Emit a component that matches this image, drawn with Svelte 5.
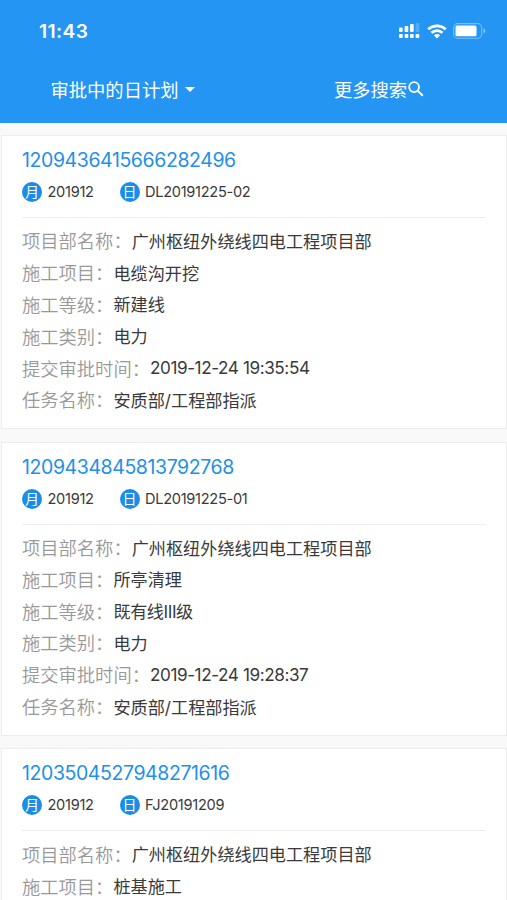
<script>
  const project = '广州枢纽外绕线四电工程项目部';
  const plans = [
    {
      id: '1209436415666282496', month: '201912', day: 'DL20191225-02',
      fields: [
        ['项目部名称', project],
        ['施工项目', '电缆沟开挖'],
        ['施工等级', '新建线'],
        ['施工类别', '电力'],
        ['提交审批时间', '2019-12-24 19:35:54'],
        ['任务名称', '安质部/工程部指派']
      ]
    },
    {
      id: '1209434845813792768', month: '201912', day: 'DL20191225-01',
      fields: [
        ['项目部名称', project],
        ['施工项目', '所亭清理'],
        ['施工等级', '既有线III级'],
        ['施工类别', '电力'],
        ['提交审批时间', '2019-12-24 19:28:37'],
        ['任务名称', '安质部/工程部指派']
      ]
    },
    {
      id: '1203504527948271616', month: '201912', day: 'FJ20191209',
      fields: [
        ['项目部名称', project],
        ['施工项目', '桩基施工']
      ]
    }
  ];
  const hasLatin = (text) => /[0-9I]/.test(text);
</script>

<div class="screen">
  <header>
    <div class="status">
      <span class="time">11:43</span>
      <div class="indicators">
        <svg width="21" height="16" viewBox="0 0 21 16" fill="#fff">
          <rect x="0" y="4.5" width="3.7" height="4.5" rx="1" />
          <rect x="5.6" y="3" width="3.7" height="6" rx="1" />
          <rect x="11" y="1" width="3.7" height="8" rx="1" />
          <rect x="16.6" y="0" width="3.7" height="9" rx="1" opacity=".22" />
          <rect x="0" y="11" width="3.7" height="4" rx="1" />
          <rect x="5.6" y="11" width="3.7" height="4" rx="1" />
          <rect x="11" y="11" width="3.7" height="4" rx="1" />
          <rect x="16.6" y="11" width="3.7" height="4" rx="1" />
        </svg>
        <svg class="wifi" width="20" height="15" viewBox="0 0 20 15">
          <path d="M1.2 5.3C6.2.6 13.8.6 18.8 5.3M4.5 8.7c3.1-2.9 7.9-2.9 11 0" fill="none" stroke="#fff" stroke-width="2.7" />
          <path d="M6.9 11.2c1.8-1.6 4.4-1.6 6.2 0L10 14.5z" fill="#fff" />
        </svg>
        <svg class="battery" width="33" height="16" viewBox="0 0 33 16">
          <rect x=".6" y=".6" width="28" height="14.6" rx="4" fill="none" stroke="#fff" stroke-opacity=".4" stroke-width="1.1" />
          <rect x="2.5" y="2.5" width="21" height="10.8" rx="1.6" fill="#fff" />
          <path d="M30.5 5.3c2.3.8 2.3 4.4 0 5.2z" fill="#fff" opacity=".5" />
        </svg>
      </div>
    </div>
    <nav>
      <button>审批中的日计划<i class="caret"></i></button>
      <button>更多搜索<svg class="search" width="16" height="16" viewBox="0 0 16 16" fill="none" stroke="#fff" stroke-width="1.8"><circle cx="6.1" cy="6.1" r="4.9" /><path d="M9.6 9.6l5.2 5.2" stroke-width="2" /></svg></button>
    </nav>
  </header>

  <main>
    {#each plans as plan}
      <article>
        <h2>{plan.id}</h2>
        <div class="meta">
          <span class="badge">月</span><span class="month">{plan.month}</span>
          <span class="badge">日</span><span>{plan.day}</span>
        </div>
        <dl>
          {#each plan.fields as [label, value]}
            <div class="row"><dt>{label}：</dt><dd class:latin={hasLatin(value)}>{value}</dd></div>
          {/each}
        </dl>
      </article>
    {/each}
  </main>
</div>

<style>
  :global(body) { margin: 0; }
  .screen {
    width: 507px;
    height: 900px;
    overflow: hidden;
    background: #f9f9f9;
    color: #3a3a3a;
    font-family: Inter, "Noto Sans CJK SC", sans-serif;
  }
  header { height: 123px; background: #2495f3; color: #fff; }
  .status {
    display: flex;
    justify-content: space-between;
    align-items: center;
    height: 62px;
    padding: 0 21px 0 39px;
    box-sizing: border-box;
  }
  .time { font-size: 19.2px; font-weight: 600; letter-spacing: .4px; }
  .indicators { display: flex; align-items: center; }
  .wifi { margin-left: 7px; }
  .battery { margin-left: 6px; }
  nav { display: flex; height: 54px; }
  button {
    display: flex;
    flex: 1;
    justify-content: center;
    align-items: center;
    padding: 0 5px 0 0;
    border: 0;
    background: none;
    color: inherit;
    font: 18.3px "Noto Sans CJK SC", sans-serif;
  }
  button:first-child { padding: 0 10px 0 0; }
  .caret {
    margin-left: 7px;
    border: 5px solid transparent;
    border-top-color: #fff;
    border-bottom: 0;
  }
  .search { margin-left: 1px; }
  main { padding-top: 12px; }
  article {
    box-sizing: border-box;
    height: 294.4px;
    margin: 0 0 12.3px 1px;
    padding: 0 20px;
    border: 1px solid #ececec;
    background: #fff;
  }
  h2 {
    margin: 0;
    padding-top: 9px;
    color: #2290e9;
    font-size: 19.5px;
    font-weight: 400;
    letter-spacing: -.41px;
    line-height: 31px;
  }
  .meta {
    display: flex;
    align-items: center;
    height: 32px;
    padding-bottom: 9px;
    border-bottom: 1px solid #ededed;
    font-size: 14.6px;
    letter-spacing: -.3px;
  }
  .badge {
    width: 20px;
    height: 20px;
    margin-right: 5.5px;
    border-radius: 50%;
    background: #188de9;
    color: #fff;
    font-size: 14px;
    letter-spacing: 0;
    line-height: 20px;
    text-align: center;
  }
  .month { width: 72px; }
  dl { margin: 0; padding-top: 6.5px; }
  .row { display: flex; align-items: center; height: 31.8px; white-space: nowrap; }
  dt { color: #999; font: 350 18.3px "Noto Sans CJK SC", sans-serif; }
  dd { margin: 0; font-size: 17.15px; }
  .latin { letter-spacing: -.42px; }
</style>
